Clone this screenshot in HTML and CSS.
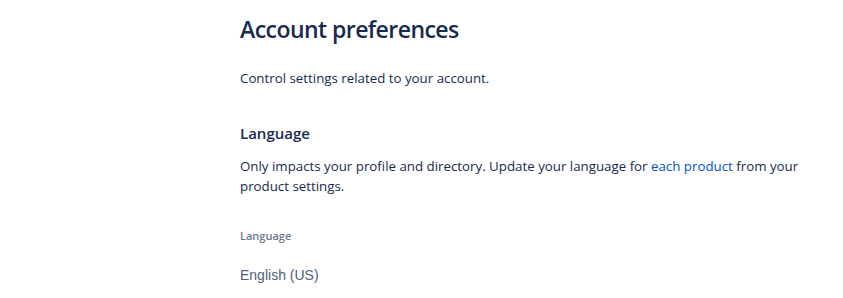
FILE: index.html
```html
<!DOCTYPE html>
<html lang="en">
<head>
<meta charset="utf-8">
<title>Account preferences</title>
<link rel="stylesheet" href="styles.css">
</head>
<body>
<main class="page">
  <h1 class="title">Account preferences</h1>
  <p class="intro">Control settings related to your account.</p>
  <section class="section">
    <h2 class="section-title">Language</h2>
    <p class="section-desc">Only impacts your profile and directory. Update your language for <a class="link" href="#">each product</a> from your product settings.</p>
    <div class="field">
      <div class="field-label">Language</div>
      <div class="field-value">English (US)</div>
    </div>
  </section>
</main>
</body>
</html>
```
FILE: styles.css
```css
html, body {
  margin: 0;
  padding: 0;
  background: #ffffff;
}
body {
  font-family: "Open Sans", "Noto Sans", "Liberation Sans", sans-serif;
  color: #172b4d;
}
.page {
  padding: 15px 0 0 240px;
  width: 570px;
}
.title {
  margin: 0;
  font-size: 23px;
  line-height: 28px;
  font-weight: 600;
  color: #172b4d;
  letter-spacing: -0.55px;
}
.intro {
  margin: 25px 0 0;
  font-size: 13.3px;
  line-height: 20px;
  color: #172b4d;
}
.section {
  margin-top: 33px;
}
.section-title {
  margin: 0;
  font-size: 15px;
  line-height: 24px;
  font-weight: 600;
  color: #172b4d;
}
.section-desc {
  margin: 11px 0 0;
  font-size: 13.3px;
  line-height: 20px;
  color: #172b4d;
}
.link {
  color: #0052cc;
  text-decoration: none;
}
.field {
  margin-top: 32px;
}
.field-label {
  font-size: 11px;
  line-height: 16px;
  font-weight: 600;
  color: #6b778c;
}
.field-value {
  margin-top: 21px;
  font-family: "Liberation Sans", Arial, sans-serif;
  font-size: 14px;
  line-height: 20px;
  color: #505f79;
}
```
